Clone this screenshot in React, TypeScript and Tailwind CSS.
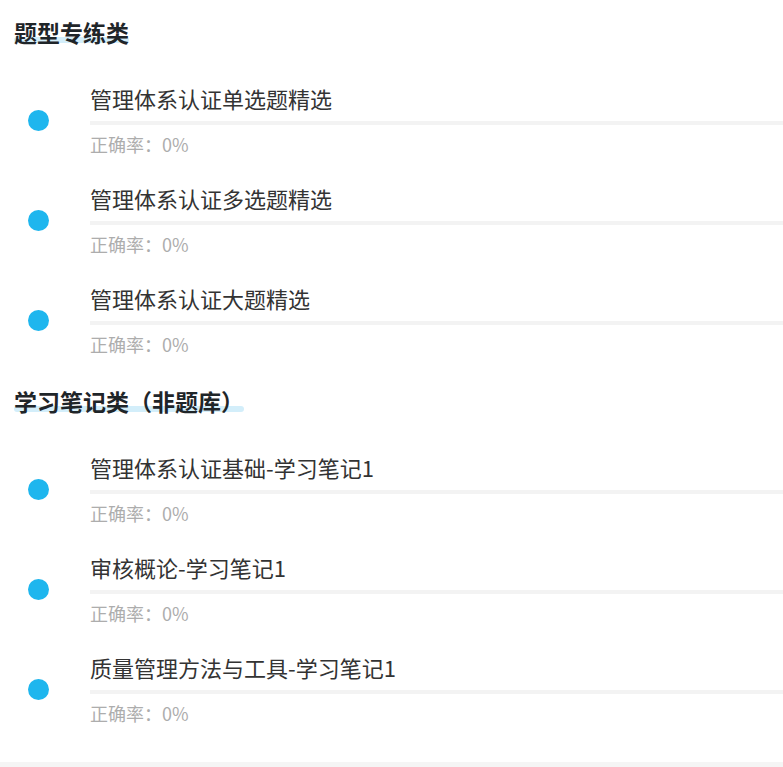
const sections = [
  {
    title: '题型专练类',
    items: ['管理体系认证单选题精选', '管理体系认证多选题精选', '管理体系认证大题精选'],
  },
  {
    title: '学习笔记类（非题库）',
    items: ['管理体系认证基础-学习笔记1', '审核概论-学习笔记1', '质量管理方法与工具-学习笔记1'],
  },
];

const SectionTitle = ({ text }: { text: string }) => (
  <div className="pl-[14px]">
    <div className="relative inline-block">
      <span className="absolute left-0 right-0 bottom-[4px] h-[6px] rounded-full bg-[#d3eefa]" />
      <h2 className="relative text-[23px] leading-[30px] font-bold text-[#1f2529]">{text}</h2>
    </div>
  </div>
);

const Item = ({ name }: { name: string }) => (
  <div className="flex mb-[18px]">
    <div className="w-[90px] shrink-0 pt-[29px]">
      <div className="ml-[28px] w-[21px] h-[21px] rounded-full bg-[#1eb6ee]" />
    </div>
    <div className="flex-1 min-w-0">
      <div className="text-[22px] leading-[34px] text-[#333333] whitespace-nowrap">{name}</div>
      <div className="h-[4px] mt-[6px] bg-[#f3f3f3]" />
      <div className="text-[18px] leading-[38px] text-[#adadad]">正确率：0%</div>
    </div>
  </div>
);

export default function App() {
  return (
    <div
      className="w-full min-h-screen bg-white flex flex-col"
      style={{ fontFamily: '"Noto Sans CJK SC", "Noto Sans", sans-serif' }}
    >
      <div className="pt-[17px]">
        {sections.map((s, i) => (
          <div key={s.title} className={i > 0 ? 'mt-[23px]' : ''}>
            <SectionTitle text={s.title} />
            <div className="mt-[34px]">
              {s.items.map((it) => (
                <Item key={it} name={it} />
              ))}
            </div>
          </div>
        ))}
      </div>
      <div className="mt-[12px] flex-1 min-h-[5px] bg-[#f5f5f5]" />
    </div>
  );
}
